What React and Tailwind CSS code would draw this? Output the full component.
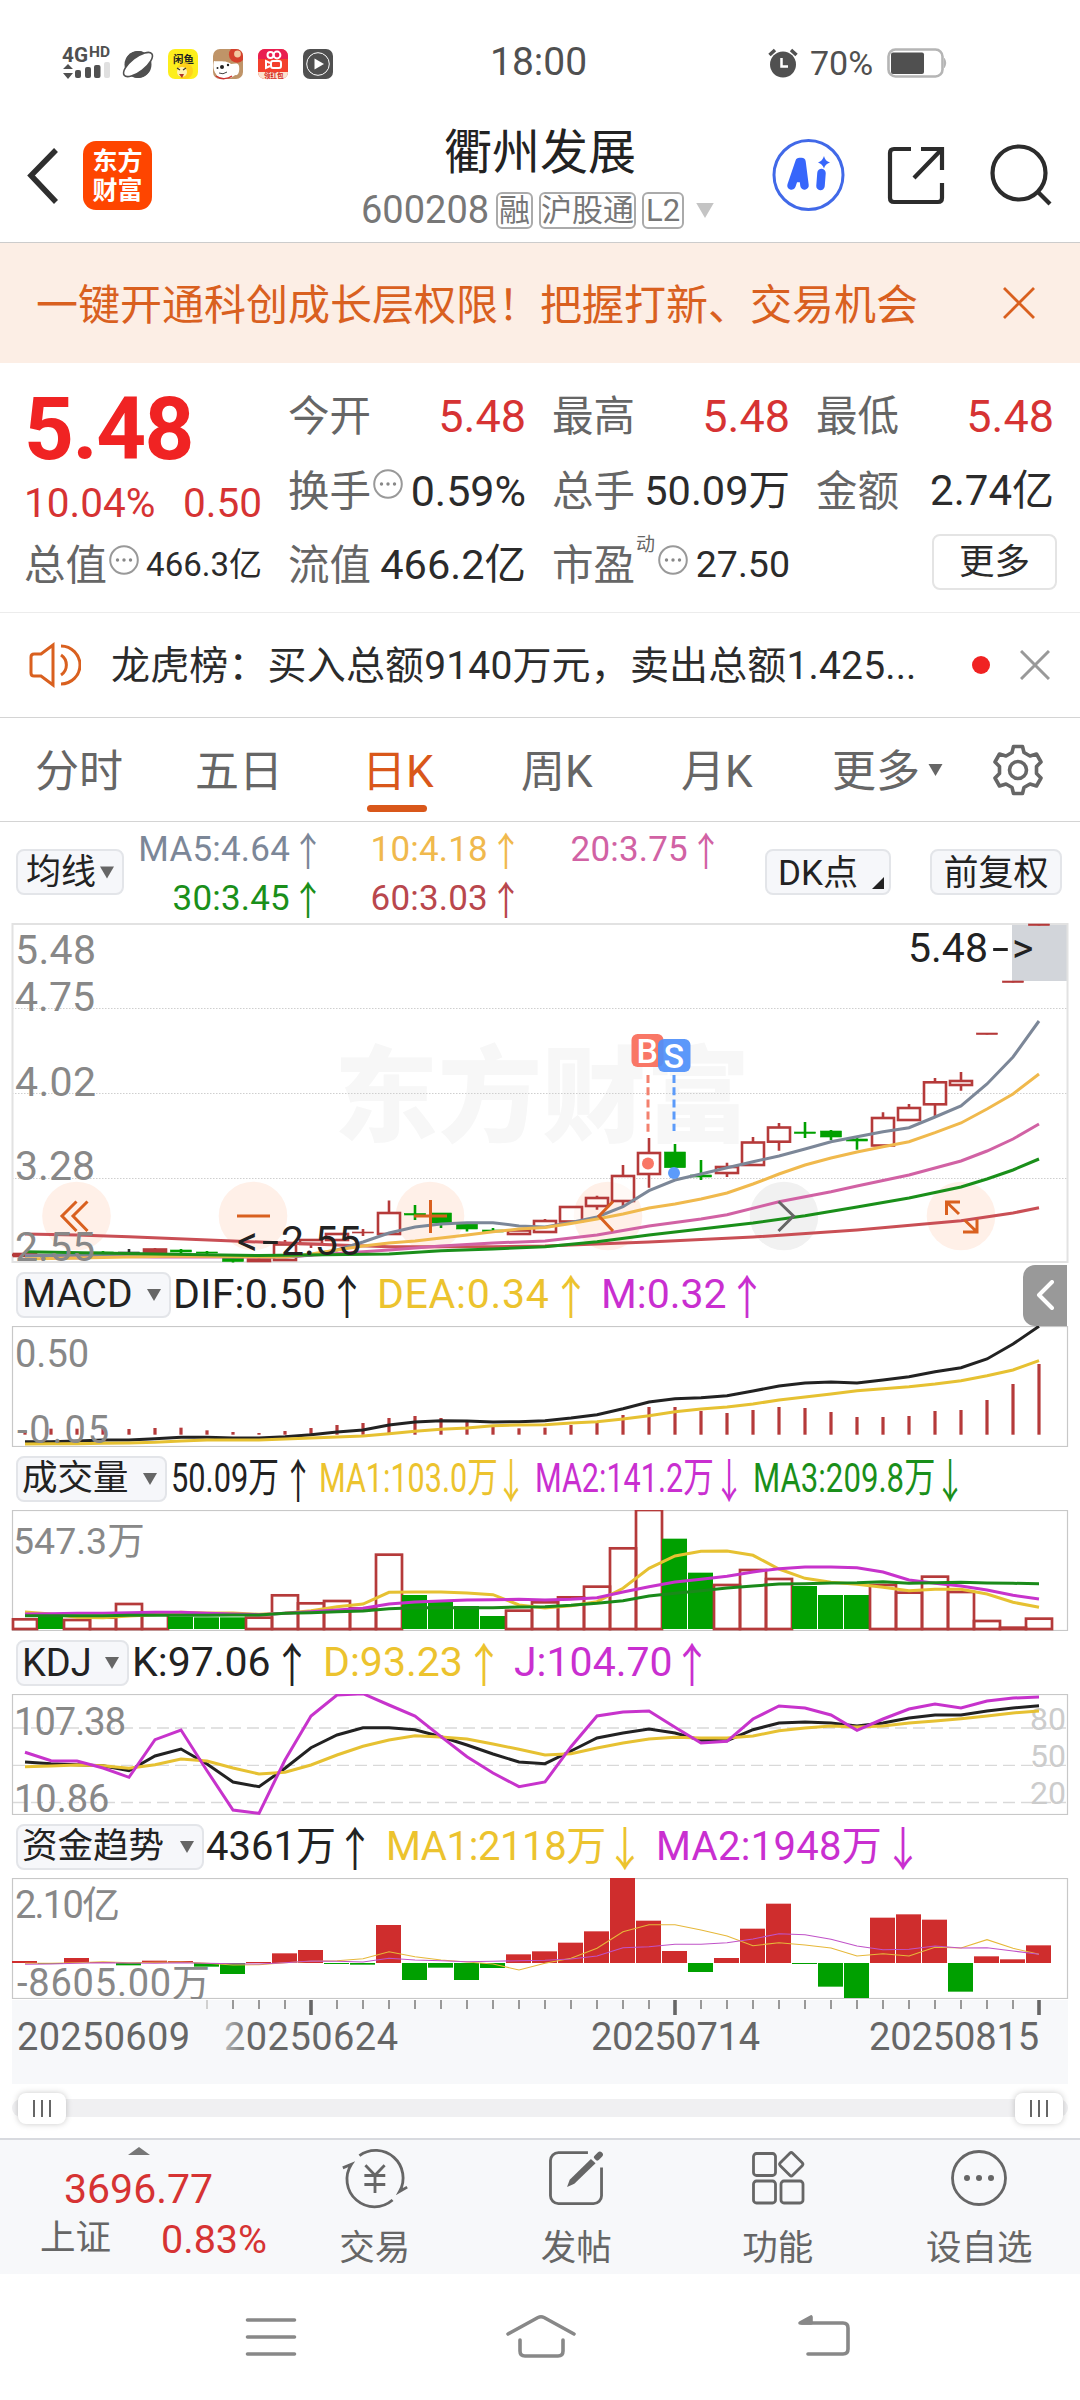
import React from 'react';
import clsx from 'clsx';

const RED = '#b53a3a';
const GREEN = '#00a000';

// x position of the n-th trading day, 40 days across the panel
const dayX = (i) => 25 + i * 26;

// series are stored in thirds of a pixel
const toPoints = (values) =>
  values.map((v, i) => `${dayX(i)},${(v / 3).toFixed(1)}`).join(' ');

// [kind, open/close top, bottom, high, low]
const candles = [
  ['r', 1254, 1256, 1254, 1256],
  ['g', 1257, 1259, 1256, 1260],
  ['r', 1256, 1258, 1254, 1259],
  ['g', 1252, 1254, 1251, 1255],
  ['k', 1252, 1253, 1249, 1254],
  ['r', 1249.5, 1252, 1248, 1253],
  ['g', 1250, 1252, 1249, 1253],
  ['g', 1252, 1253, 1251, 1258],
  ['g', 1256, 1261.5, 1256, 1262.5],
  ['r', 1259.5, 1261, 1258, 1261],
  ['r', 1244.5, 1260, 1240, 1260],
  ['r', 1240, 1244, 1239, 1248],
  ['r', 1234, 1240, 1234, 1240],
  ['x', 1232, 1233, 1229, 1236],
  ['r', 1213, 1234, 1200.5, 1234],
  ['g', 1213.5, 1215, 1205, 1220],
  ['g', 1213, 1223, 1213, 1228],
  ['g', 1224, 1229, 1224, 1231.5],
  ['g', 1230, 1232, 1228, 1233],
  ['r', 1230.5, 1234, 1230, 1234],
  ['r', 1221, 1232, 1219, 1232],
  ['r', 1207, 1221.5, 1207, 1221],
  ['r', 1198, 1206, 1195.7, 1209.7],
  ['r', 1176, 1201, 1165, 1206],
  ['r', 1153, 1174, 1138, 1187.7],
  ['g', 1152, 1167.7, 1144, 1175],
  ['g', 1175, 1177, 1160, 1180],
  ['r', 1167, 1173, 1162.7, 1177],
  ['r', 1142.5, 1165, 1137, 1165],
  ['r', 1127.5, 1141.7, 1123, 1150.7],
  ['g', 1132, 1133.4, 1122, 1138],
  ['g', 1131, 1137, 1130, 1140],
  ['g', 1139, 1141, 1138, 1149.7],
  ['r', 1118, 1145.5, 1112.3, 1145],
  ['r', 1108, 1120, 1104, 1120],
  ['r', 1082.3, 1104.3, 1078, 1116.7],
  ['r', 1081, 1085, 1072, 1090.7],
  ['x', 1033, 1034.5, 1033, 1034.5],
  ['x', 981, 982.5, 981, 982.5],
  ['x', 924, 925.5, 924, 925.5],
];

const averages = [
  { color: '#c94f55', pts: [[0, 1234], [2, 1235], [4, 1236.7], [8, 1241], [12, 1245], [14, 1246.7], [18, 1246.7], [20, 1246], [24, 1242], [28, 1237], [32, 1230], [36, 1220.7], [38, 1213], [39, 1207.7]] },
  { color: '#d162a4', pts: [[0, 1255], [5, 1257], [10, 1257], [14, 1250], [16, 1246], [18, 1243], [20, 1241], [22, 1235], [24, 1226], [26, 1219], [27, 1214.7], [29, 1201.7], [31, 1191.7], [32, 1186], [34, 1175], [36, 1161], [37, 1151], [38, 1139], [39, 1124]] },
  { color: '#7c8798', pts: [[0, 1256], [4, 1254], [8, 1256], [10, 1257], [11, 1255], [12, 1250], [13, 1242], [14, 1233], [15, 1227], [16, 1224], [17, 1222.7], [18, 1222.7], [19, 1226], [20, 1227], [21, 1222.5], [22, 1217], [23, 1206.7], [24, 1190.7], [25, 1180], [26, 1174], [27, 1167.7], [28, 1161.7], [29, 1156], [30, 1149], [31, 1141.7], [32, 1136.7], [33, 1131.7], [34, 1127.7], [35, 1117], [36, 1106], [37, 1084], [38, 1057], [39, 1021]] },
  { color: '#f0b94d', pts: [[0, 1259], [6, 1256], [10, 1257], [11, 1254], [12, 1250], [13, 1246], [14, 1243], [15, 1241], [16, 1238], [17, 1235], [18, 1231.7], [19, 1229], [20, 1227.5], [21, 1223.5], [22, 1219], [23, 1214], [24, 1208], [25, 1204], [26, 1199], [27, 1193], [28, 1184], [29, 1174], [30, 1165], [31, 1158], [32, 1152], [33, 1146.7], [34, 1141.7], [35, 1132.7], [36, 1123], [37, 1109], [38, 1094], [39, 1074]] },
  { color: '#1a8f1a', pts: [[0, 1251.7], [5, 1254], [9, 1255.5], [14, 1254], [16, 1250.7], [18, 1249], [20, 1246.7], [22, 1241.7], [24, 1235], [26, 1229], [28, 1223], [30, 1215.7], [32, 1207], [34, 1198], [36, 1187], [37, 1179], [38, 1170], [39, 1159]] },
];

const macd = {
  bars: [512, 506, 506, 506, 507, 504, 503, 511, 516, 519, 513, 504, 495, 489, 474, 468, 474, 486, 500, 505, 503, 495, 487, 465, 441, 441, 453, 459, 450, 441, 444, 456, 471, 471, 468, 453, 450, 420, 372, 312],
  dif: [545, 545, 543, 540, 540, 536, 532, 532, 534, 534, 530, 524, 516, 510, 495, 486, 482, 483, 486, 485, 482, 474, 464, 446, 426, 416, 413, 407, 393, 378, 369, 366, 369, 360, 350, 335, 323, 297, 252, 199],
  dea: [552, 551, 551, 550, 549, 547, 543, 540, 540, 540, 537, 534, 531, 528, 521, 514, 508, 504, 497, 495, 494, 489, 485, 477, 467, 455, 447, 441, 432, 420, 411, 402, 392, 386, 380, 372, 362, 347, 330, 302],
};

const volume = {
  bars: [1078, 1070, 1080, 1073, 1032, 1057, 1070, 1072, 1072, 1073, 1006, 1030, 1023, 1045, 884, 1005, 1026, 1038, 1068, 1052, 1027, 1012, 980, 865, 750, 836, 938, 975, 930, 957, 978, 1005, 1005, 975, 998, 950, 996, 1083, 1103, 1076],
  down: [1, 6, 7, 8, 15, 16, 17, 18, 25, 26, 30, 31, 32],
  ma1: [1056, 1062, 1072, 1073, 1068, 1064, 1057, 1059, 1059, 1063, 1060, 1052, 1040, 1032, 997, 996, 996, 999, 1004, 1035, 1044, 1037, 1025, 985, 925, 888, 874, 873, 886, 927, 955, 967, 973, 982, 992, 988, 988, 1002, 1027, 1042],
  ma2: [1062, 1061, 1060, 1060, 1058, 1057, 1057, 1060, 1062, 1064, 1060, 1055, 1050, 1045, 1032, 1026, 1023, 1020, 1019, 1018, 1020, 1018, 1013, 996, 980, 966, 958, 949, 936, 926, 921, 921, 923, 936, 960, 970, 978, 990, 1006, 1017],
  ma3: [1067, 1067, 1067, 1067, 1066, 1066, 1066, 1066, 1065, 1065, 1060, 1058, 1055, 1053, 1046, 1043, 1043, 1043, 1043, 1041, 1040, 1036, 1030, 1022, 1008, 1000, 992, 984, 978, 972, 971, 969, 968, 965, 970, 968, 967, 969, 970, 971],
};

const kdj = {
  k: [366, 371, 374, 377, 392, 348, 327, 372, 426, 440, 385, 323, 285, 263, 263, 269, 290, 315, 342, 366, 371, 333, 294, 279, 267, 279, 301, 302, 269, 249, 246, 249, 258, 249, 234, 225, 225, 213, 204, 197],
  d: [380, 378, 375, 377, 385, 374, 357, 363, 384, 402, 397, 375, 345, 319, 300, 287, 291, 297, 312, 328, 345, 341, 324, 309, 297, 292, 294, 294, 288, 272, 264, 258, 261, 258, 249, 243, 236, 228, 219, 213],
  j: [337, 362, 363, 384, 412, 299, 270, 392, 510, 520, 360, 228, 165, 161, 195, 228, 290, 350, 399, 440, 426, 320, 228, 216, 213, 262, 309, 304, 237, 198, 204, 225, 271, 237, 207, 192, 204, 183, 174, 171],
};

const fund = {
  bars: [963, 971, 954, 966, 976, 962, 963, 980, 1002, 966, 940, 930, 972, 974, 855, 1020, 983, 1020, 984, 943, 934, 908, 874, 714, 842, 933, 996, 954, 866, 791, 971, 1040, 1074, 833, 823, 839, 1055, 949, 958, 916],
  ma1: [970, 970, 968, 965, 968, 967, 966, 970, 975, 974, 968, 964, 962, 956, 935, 950, 960, 966, 972, 990, 970, 955, 925, 875, 854, 854, 870, 888, 917, 908, 915, 924, 948, 941, 948, 922, 924, 899, 925, 943],
  ma2: [973, 972, 970, 968, 969, 970, 968, 970, 971, 972, 968, 963, 964, 966, 955, 960, 962, 965, 964, 962, 961, 957, 948, 923, 920, 913, 913, 908, 897, 881, 884, 898, 918, 929, 928, 918, 924, 923, 933, 943],
};

const Series = ({ values, color, width = 3 }) => (
  <polyline points={toPoints(values)} fill="none" stroke={color} strokeWidth={width} />
);

const Frame = ({ y }) => (
  <rect x="12.5" y={y} width="1055" height="120" fill="none" stroke="#c8c8c8" strokeWidth="1.2" />
);

const Arrow = ({ down, className }) => (
  <span
    className={clsx(
      'flex shrink-0 scale-y-[1.2] justify-center font-[Noto_Sans_CJK_SC] leading-none',
      className
    )}
  >
    {down ? '↓' : '↑'}
  </span>
);

const Triangle = ({ className }) => (
  <svg viewBox="0 0 14 12" className={clsx('shrink-0', className)}>
    <path d="M0 0H14L7 12Z" fill="currentColor" />
  </svg>
);

const MoreDot = ({ className }) => (
  <svg viewBox="0 0 30 30" className={clsx('h-[30px] w-[30px] shrink-0', className)}>
    <circle cx="15" cy="15" r="13.8" fill="none" stroke="#999" strokeWidth="2" />
    <circle cx="8.5" cy="15" r="1.7" fill="#888" />
    <circle cx="15" cy="15" r="1.7" fill="#888" />
    <circle cx="21.5" cy="15" r="1.7" fill="#888" />
  </svg>
);

const StatusBar = () => (
  <div className="flex h-[125px] items-center pl-[62px] text-[#505050]">
    <svg viewBox="0 0 272 32" className="h-8 w-[272px] overflow-visible">
      <text x="0" y="14.5" fontSize="21" fontWeight="700" fill="#505050" textLength="26" lengthAdjust="spacingAndGlyphs">4G</text>
      <text x="27" y="10" fontSize="15" fontWeight="700" fill="#505050" textLength="21" lengthAdjust="spacingAndGlyphs">HD</text>
      <path d="M1 22L6 17L11 22ZM1 26L6 32L11 26Z" fill="#505050" />
      <rect x="13" y="23" width="6" height="8" rx="2" fill="#505050" />
      <rect x="23" y="20" width="6" height="11" rx="2" fill="#505050" />
      <rect x="32" y="18" width="6.5" height="13" rx="2" fill="#505050" />
      <rect x="42" y="15" width="6" height="16" rx="2" fill="#e0e0e0" />
      {/* planet */}
      <circle cx="76" cy="17.5" r="13.5" fill="#505050" />
      <ellipse cx="76" cy="17.5" rx="17.5" ry="7" transform="rotate(-38 76 17.5)" fill="#fff" stroke="#505050" strokeWidth="1.6" />
      <path d="M64.5 11A13.5 13.5 0 0 1 82 5.4C76 6 68 12 64 20A13.5 13.5 0 0 1 64.5 11ZM87.5 24A13.5 13.5 0 0 1 70 29.6C77 29 84 23 88 15A13.5 13.5 0 0 1 87.5 24Z" fill="#505050" />
      {/* yellow app */}
      <rect x="106" y="2" width="30" height="30" rx="7" fill="#fdee1c" />
      <text x="111" y="15.5" fontSize="10.5" fontWeight="700" fill="#222">闲鱼</text>
      <circle cx="123" cy="24" r="8" fill="#ffd21c" />
      <circle cx="120" cy="25" r="5" fill="#fff3b0" />
      <path d="M115 21L118 23M121 23L124 21" stroke="#333" strokeWidth="1.2" />
      <path d="M117 27H122L120 31Z" fill="#b1332a" />
      {/* dog app */}
      <rect x="151" y="2" width="30" height="30" rx="7" fill="#bf9468" />
      <path d="M169 2H174A7 7 0 0 1 181 9V13A7.500 7.500 0 0 1 169 2Z" fill="#d5402c" />
      <circle cx="175.500" cy="7" r="3.4" fill="#f2c9a0" />
      <path d="M152 14C156 15 164 13 169 17C172 17 176 15 177 19C178 25 176 29 173 28C170 32 156 33 154 27C151 23 151 18 152 14Z" fill="#fff" />
      <circle cx="160" cy="20" r="2" fill="#222" />
      <circle cx="155.500" cy="21" r="1" fill="#222" />
      <circle cx="166" cy="18" r="1.200" fill="#222" />
      <path d="M157 26Q161 28 165 25" stroke="#444" strokeWidth="1" fill="none" />
      <path d="M154 29C159 33 166 32 170 29" stroke="#c33" strokeWidth="1.5" fill="none" />
      {/* camera app */}
      <rect x="196" y="2" width="30" height="30" rx="7" fill="#f3402c" />
      <path d="M196 9A7 7 0 0 1 203 2H219A7 7 0 0 1 226 9V12H196Z" fill="#e91e50" />
      <g fill="none" stroke="#fff" strokeWidth="2">
        <circle cx="208.500" cy="8" r="3" />
        <circle cx="215" cy="8" r="3.400" />
        <rect x="209" y="14" width="10" height="7" rx="2" />
        <path d="M208 16L204 14V21L208 19" />
      </g>
      <path d="M196 25H226A7 7 0 0 1 219 32H203A7 7 0 0 1 196 25Z" fill="#fbe3cf" />
      <text x="202" y="31" fontSize="6.500" fontWeight="700" fill="#d3281d">领红包</text>
      {/* player */}
      <rect x="241" y="2" width="30" height="30" rx="7" fill="#505050" />
      <circle cx="256" cy="17" r="11.300" fill="none" stroke="#fff" strokeWidth="1" />
      <path d="M252.500 11.500L262 17L252.500 22.500Z" fill="#fff" />
    </svg>
    <span className="ml-[156px] w-[98px] text-[39px] leading-none">18:00</span>
    <svg viewBox="0 0 30 30" className="ml-[180px] h-[30px] w-[30px]">
      <circle cx="15" cy="16.500" r="13" fill="#505050" />
      <path d="M1.500 7L7 2M28.500 7L23 2" stroke="#505050" strokeWidth="3.500" />
      <path d="M13.500 10V18.500H20" fill="none" stroke="#fff" strokeWidth="2.500" />
    </svg>
    <span className="ml-3 w-[65px] text-[34px] leading-none">70%</span>
    <svg viewBox="0 0 60 30" className="ml-[12px] h-[30px] w-[60px]">
      <rect x="1.500" y="1.500" width="54" height="27" rx="7" fill="none" stroke="#b5b5b5" strokeWidth="2.600" />
      <rect x="4" y="4.500" width="33" height="21.500" rx="2" fill="#505050" />
      <path d="M57.500 10.500Q60 15 57.500 19.500Z" fill="#b5b5b5" stroke="#b5b5b5" />
    </svg>
  </div>
);

const Tag = ({ children, className }) => (
  <span
    className={clsx(
      'flex h-[37px] shrink-0 items-center justify-center rounded-[6px] border-2 border-[#aaa] text-[31px] leading-none text-[#777]',
      className
    )}
  >
    {children}
  </span>
);

const Header = () => (
  <div className="flex h-[118px] border-b border-[#ccc] pl-[26px]">
    <svg viewBox="0 0 34 58" className="mt-[21px] h-[58px] w-[34px]">
      <path d="M30 4L5 29.500L30 56" fill="none" stroke="#2f2f2f" strokeWidth="5.500" />
    </svg>
    <div className="mt-4 ml-[23px] flex h-[69px] w-[69px] flex-col items-center justify-center rounded-[13px] bg-[#fe4500] text-[25px] leading-[29px] font-bold text-white">
      <span>东方</span>
      <span>财富</span>
    </div>
    <div className="ml-[209px] flex w-[357px] flex-col">
      <h1 className="mt-[1px] ml-[83px] text-[48px] leading-[54px] text-[#222]">衢州发展</h1>
      <div className="mt-[4px] flex h-[52px] items-center gap-[6px]">
        <span className="mr-[1px] w-[128px] text-[38px] leading-none text-[#777]">600208</span>
        <Tag className="w-[37px]">融</Tag>
        <Tag className="w-[97px]">沪股通</Tag>
        <Tag className="w-[42px]">L2</Tag>
        <Triangle className="ml-1 h-[15px] w-[22px] text-[#c4c4c4]" />
      </div>
    </div>
    <svg viewBox="0 0 290 90" className="ml-[50px] h-[90px] w-[290px]">
      <circle cx="40.500" cy="50" r="34.500" fill="none" stroke="#4169e8" strokeWidth="3" />
      <g fill="none" stroke="#3766fb" strokeWidth="8.500" strokeLinecap="round" strokeLinejoin="round">
        <path d="M23.500 60.500L31.500 37H33.500L36.500 60.500M28 53H35" />
        <path d="M53.500 48L52.500 61" />
      </g>
      <path d="M56 31Q57 36 62 37.500Q57 39 56 43.500Q54.500 39 50 37.500Q54.500 36 56 31Z" fill="#3766fb" />
      <g fill="none" stroke="#2c2c2c" strokeWidth="4.200">
        <path d="M143 24H126Q122 24 122 28V73Q122 77 126 77H170Q174 77 174 73V58" />
        <path d="M153 24H174V45M174 24L146 53" />
        <circle cx="251" cy="48" r="26.500" />
        <path d="M270 67L282 79" />
      </g>
    </svg>
  </div>
);

const Label = ({ children }) => (
  <span className="mt-[3px] text-[41.500px] text-[#666]">{children}</span>
);

const Quote = () => (
  <div className="grid h-[249px] grid-cols-[238px_238px_238px_238px] gap-x-[26px] pl-[24px] leading-none text-[#2b2b2b]">
    <div className="flex h-full flex-col">
      <span className="mt-[22px] h-[88px] text-[87px] leading-[88px] font-bold tracking-[-1.5px] text-[#f02323]">
        5.48
      </span>
      <div className="mt-[8px] flex h-11 items-center justify-between text-[40.500px] text-[#d63333]">
        <span>10.04%</span>
        <span>0.50</span>
      </div>
      <div className="mt-[17px] flex h-11 items-center">
        <Label>总值</Label>
        <MoreDot className="-mt-2 ml-[2px]" />
        <span className="ml-auto text-[33px]">466.3亿</span>
      </div>
    </div>
    <div className="flex flex-col pt-[30px]">
      <div className="flex h-11 items-center justify-between">
        <Label>今开</Label>
        <span className="mt-[2px] text-[45px] text-[#d63333]">5.48</span>
      </div>
      <div className="mt-[31px] flex h-11 items-center">
        <Label>换手</Label>
        <MoreDot className="-mt-3 ml-[2px]" />
        <span className="ml-auto pt-[2px] text-[43px]">0.59%</span>
      </div>
      <div className="mt-[30px] flex h-11 items-center justify-between">
        <Label>流值</Label>
        <span className="pt-[2px] text-[41.500px]">466.2亿</span>
      </div>
    </div>
    <div className="flex flex-col pt-[30px]">
      <div className="flex h-11 items-center justify-between">
        <Label>最高</Label>
        <span className="mt-[2px] text-[45px] text-[#d63333]">5.48</span>
      </div>
      <div className="mt-[31px] flex h-11 items-center justify-between">
        <Label>总手</Label>
        <span className="pt-[2px] text-[41.500px]">50.09万</span>
      </div>
      <div className="mt-[30px] flex h-11 items-center">
        <Label>市盈</Label>
        <span className="-mt-10 ml-[1px] text-[19px] text-[#666]">动</span>
        <MoreDot className="-mt-2 ml-[3px]" />
        <span className="ml-auto pt-[2px] text-[37.500px]">27.50</span>
      </div>
    </div>
    <div className="flex flex-col pt-[30px]">
      <div className="flex h-11 items-center justify-between">
        <Label>最低</Label>
        <span className="mt-[2px] text-[45px] text-[#d63333]">5.48</span>
      </div>
      <div className="mt-[31px] flex h-11 items-center justify-between">
        <Label>金额</Label>
        <span className="pt-[2px] text-[42px]">2.74亿</span>
      </div>
      <button className="mt-[22px] -mr-[3px] ml-auto h-[56px] w-[125px] rounded-lg border-2 border-[#e4e4e4] pt-[1px] text-[35.500px] leading-none">
        更多
      </button>
    </div>
  </div>
);

const News = () => (
  <div className="flex h-[106px] items-center border-y border-t-[#ececec] border-b-[#d4d4d4] pl-[29px]">
    <svg viewBox="0 0 52 46" className="h-[46px] w-[52px]" fill="none" stroke="#d9601f" strokeWidth="3">
      <path d="M24 3V43L12 34H5Q2 34 2 31V15Q2 12 5 12H12Z" />
      <path d="M32 13A12 12 0 0 1 32 33" />
      <path d="M32 4A19 19 0 0 1 32 42" />
    </svg>
    <p className="ml-[30px] w-[808px] pt-[2px] text-[39px] leading-none tracking-[0.150px] whitespace-nowrap text-[#2b2b2b]">
      龙虎榜：买入总额9140万元，卖出总额1.425...
    </p>
    <span className="ml-[53px] h-[18px] w-[18px] rounded-full bg-[#f02222]" />
    <svg viewBox="0 0 30 30" className="ml-[30px] h-[30px] w-[30px]" stroke="#999" strokeWidth="3">
      <path d="M1 1L29 29M29 1L1 29" />
    </svg>
  </div>
);

const tabs = [
  { name: '分时', className: 'ml-[35px] w-[88px]' },
  { name: '五日', className: 'ml-[72px] w-[88px]' },
  { name: '日K', className: 'ml-[79px] w-[73px] text-[#d9571a]', active: true },
  { name: '周K', className: 'ml-[86px] w-[75px]' },
  { name: '月K', className: 'ml-[85px] w-[75px]' },
  { name: '更多', className: 'ml-[76px] w-[90px]' },
];

const Tabs = () => (
  <div className="flex h-[104px] items-center border-b border-[#d4d4d4] text-[44px] leading-none text-[#666]">
    {tabs.map((tab) => (
      <span key={tab.name} className={clsx('relative pt-[5px] whitespace-nowrap', tab.className)}>
        {tab.name}
        {tab.active && (
          <span className="absolute top-[60px] left-[5px] h-[7px] w-[60px] rounded-full bg-[#d9571a]" />
        )}
      </span>
    ))}
    <Triangle className="ml-[6px] h-[12px] w-[15px]" />
    <svg viewBox="0 0 52 52" className="ml-[49px] h-[52px] w-[52px]" fill="none" stroke="#666" strokeWidth="3.600" strokeLinejoin="round">
      <path d="M21.500 2.500H30.500L32 8.500L38 12L44.500 10L49 18L44.500 22.500V29.500L49 34L44.500 42L38 40L32 43.500L30.500 49.500H21.500L20 43.500L14 40L7.500 42L3 34L7.500 29.500V22.500L3 18L7.500 10L14 12L20 8.500Z" />
      <circle cx="26" cy="26" r="8.500" />
    </svg>
  </div>
);

const Chip = ({ children, className }) => (
  <button
    className={clsx(
      'flex h-[46px] shrink-0 items-center rounded-lg border-2 border-[#e3e5e9] bg-[#f6f7fa] leading-none text-[#222]',
      className
    )}
  >
    {children}
  </button>
);

const maCells = [
  { text: 'MA5:4.64', className: 'text-[#7c8798]' },
  { text: '10:4.18', className: 'text-[#f0b94d]' },
  { text: '20:3.75', className: 'text-[#d162a4]' },
  { text: '30:3.45', className: 'text-[#1a8f1a]' },
  { text: '60:3.03', className: 'text-[#b9474d]' },
];

const AverageBar = () => (
  <div className="flex h-[101px] pl-[16px]">
    <Chip className="mt-[27px] w-[108px] pl-[8px] text-[35px]">
      均线
      <Triangle className="ml-[4px] h-[13px] w-[14px] text-[#666]" />
    </Chip>
    <div className="grid h-[98px] w-[590px] grid-cols-[192px_198px_200px] grid-rows-[49px_49px] pt-[3px] text-[35px] leading-none tracking-[0.200px]">
      {maCells.map((c) => (
        <div key={c.text} className={clsx('flex items-center justify-end', c.className)}>
          {c.text}
          <Arrow className="ml-[10px] w-[16px] text-[33px]" />
        </div>
      ))}
    </div>
    <Chip className="relative mt-[27px] ml-[51px] w-[126px] pt-[2px] pl-[11px] text-[35px]">
      DK点
      <svg viewBox="0 0 12 12" className="absolute right-[5px] bottom-[4px] h-[12px] w-[12px]">
        <path d="M12 0V12H0Z" fill="#222" />
      </svg>
    </Chip>
    <Chip className="mt-[27px] ml-[39px] w-[132px] justify-center pt-[2px] text-[35px]">前复权</Chip>
  </div>
);

const Candle = ({ data, i }) => {
  const [kind, top, bottom, high, low] = data;
  const x = dayX(i);
  if (kind === 'r') {
    return (
      <g stroke={RED} strokeWidth="2.600" fill="none">
        <rect x={x - 11} y={top} width="22" height={bottom - top} fill="#fff" fillOpacity="0.6" />
        <path d={`M${x} ${high}V${top}M${x} ${bottom}V${low}`} />
      </g>
    );
  }
  const color = kind === 'g' ? GREEN : kind === 'k' ? '#333' : RED;
  return (
    <g fill={color} stroke={color}>
      <rect x={x - 10.5} y={top} width="21" height={bottom - top} strokeWidth="0.600" />
      <path d={`M${x} ${high}V${low}`} strokeWidth="2.600" />
    </g>
  );
};

const MainChart = () => (
  <svg viewBox="0 923 1080 340" className="block h-[340px] w-full overflow-visible">
    <text x="334" y="1134" fontSize="104" fontWeight="900" fill="#f7f7f7">东方财富</text>
    <rect x="1012" y="924" width="55" height="57" fill="#d2d5da" />
    <g stroke="#cfcfcf" strokeWidth="1" strokeDasharray="1.500 1.500">
      <path d="M12 1008.500H1067M12 1093.500H1067M12 1178.500H1067" />
    </g>
    <rect x="12.500" y="924" width="1055" height="338" fill="none" stroke="#e2e2e2" strokeWidth="2" />
    {[76.5, 253, 430, 608, 784, 961].map((cx) => (
      <circle key={cx} cx={cx} cy="1216" r="34.300" fill={cx === 784 ? '#f1f1f1' : '#fff0e8'} />
    ))}
    {candles.map((c, i) => (
      <Candle key={i} data={c} i={i} />
    ))}
    <path d="M12 1255H36" stroke={RED} strokeWidth="2.500" />
    {averages.map((a) => (
      <polyline
        key={a.color}
        points={a.pts.map(([i, y]) => `${dayX(i)},${y}`).join(' ')}
        fill="none"
        stroke={a.color}
        strokeWidth="3"
      />
    ))}
    <g fill="none" stroke="#d9601f" strokeWidth="3">
      <path d="M76.500 1201.500L62 1216L76.500 1231M87.500 1201.500L73 1216L87.500 1231" />
      <path d="M237 1216H270M414 1216H447M430.500 1200V1233" />
      <path d="M613 1201.500L599 1216L613 1231" />
      <path d="M778.500 1201.500L793.500 1216L778.500 1231" stroke="#666" />
      <path d="M960 1202H946.500V1215M946.500 1202L959 1214M963 1232H977V1219M977 1232L964.500 1220" />
    </g>
    <g strokeWidth="3" strokeDasharray="8 4.200">
      <path d="M648 1075V1134" stroke="#f3816f" />
      <path d="M674 1075V1131" stroke="#5c9bfa" />
    </g>
    <circle cx="648" cy="1163.500" r="6" fill="#f97766" />
    <circle cx="674" cy="1173" r="6" fill="#5c9bfa" />
    <rect x="631.500" y="1034" width="32" height="33" rx="6" fill="#f97766" />
    <text x="636.500" y="1062.500" fontSize="34" fontWeight="500" fill="#fff">B</text>
    <rect x="658" y="1039" width="32.500" height="33" rx="6" fill="#5090fa" fillOpacity="0.93" />
    <text x="663.500" y="1067.500" fontSize="34" fontWeight="500" fill="#fff">S</text>
    <g fontSize="41" fill="#888">
      <text x="15" y="963.500" textLength="81">5.48</text>
      <text x="15" y="1010.500" textLength="80">4.75</text>
      <text x="15" y="1095.500" textLength="81">4.02</text>
      <text x="15" y="1180" textLength="80">3.28</text>
      <text x="15" y="1261" textLength="80">2.55</text>
    </g>
    <g fontSize="41" fill="#222">
      <text x="908" y="961.500">5.48</text>
      <text x="992" y="961.500" textLength="17" lengthAdjust="spacingAndGlyphs">-</text>
      <text x="1012" y="961.500">&gt;</text>
      <text x="237" y="1255">&lt;</text>
      <text x="262" y="1255" textLength="17" lengthAdjust="spacingAndGlyphs">-</text>
      <text x="281" y="1255">2.55</text>
    </g>
  </svg>
);

const LegendRow = ({ title, chipClass, children, className }) => (
  <div className={clsx('flex h-[63px] items-center pl-[16px] leading-none', className)}>
    <Chip className={clsx('justify-between pr-[8px] pl-[4px]', chipClass)}>
      {title}
      <Triangle className="h-[12px] w-[14px] text-[#666]" />
    </Chip>
    {children}
  </div>
);

const Legend = ({ text, down, className, textClass = '', arrowClass }) => (
  <div className={clsx('flex shrink-0 items-center text-[41px]', className)}>
    <span className={clsx('shrink-0 whitespace-nowrap', textClass)}>{text}</span>
    <Arrow down={down} className={clsx('w-[20px] text-[39px]', arrowClass)} />
  </div>
);

const MacdPanel = () => (
  <>
    <LegendRow title="MACD" chipClass="w-[155px] text-[39px]">
      <Legend text="DIF:0.50" className="ml-[2px] text-[#222]" textClass="w-[164px] tracking-[0.300px]" />
      <Legend text="DEA:0.34" className="ml-[20px] text-[#ecc32e]" textClass="w-[184px] tracking-[0.700px]" />
      <Legend text="M:0.32" className="ml-[20px] text-[#c92fd0]" textClass="w-[136px]" />
      <button className="mt-[1px] ml-auto mr-[13px] flex h-[61px] w-[44px] items-center justify-center rounded-l-xl bg-[#999]">
        <svg viewBox="0 0 18 30" className="h-[30px] w-[18px]">
          <path d="M16 2L3 15L16 28" fill="none" stroke="#fff" strokeWidth="4" strokeLinecap="round" strokeLinejoin="round" />
        </svg>
      </button>
    </LegendRow>
    <svg viewBox="0 66 1080 121" className="block h-[121px] w-full">
      <Frame y={66.5} />
      <g stroke={RED} strokeWidth="3.200">
        {macd.bars.map((v, i) => (
          <path key={i} d={`M${dayX(i)} 174.700V${v / 3}`} />
        ))}
      </g>
      <Series values={macd.dif} color="#222" />
      <Series values={macd.dea} color="#e6c132" />
      <g fontSize="38" fill="#888">
        <text x="15" y="106.500">0.50</text>
        <text x="17" y="183" textLength="92">-0.05</text>
      </g>
    </svg>
  </>
);

const VolumePanel = () => (
  <>
    <LegendRow title="成交量" chipClass="w-[151px] text-[35.500px]">
      <Legend text="50.09万" className="ml-[4px] text-[#222]" textClass="w-[117px] origin-left scale-x-[0.75]" arrowClass="scale-x-[0.8]" />
      <Legend text="MA1:103.0万" down className="ml-[11px] text-[#ecc32e]" textClass="w-[182px] origin-left scale-x-[0.745]" arrowClass="scale-x-[0.8]" />
      <Legend text="MA2:141.2万" down className="ml-[14px] text-[#c92fd0]" textClass="w-[184px] origin-left scale-x-[0.745]" arrowClass="scale-x-[0.8]" />
      <Legend text="MA3:209.8万" down className="ml-[14px] text-[#1a8f1a]" textClass="w-[187px] origin-left scale-x-[0.76]" arrowClass="scale-x-[0.8]" />
    </LegendRow>
    <svg viewBox="0 250 1080 121" className="block h-[121px] w-full">
      <Frame y={250.5} />
      {volume.bars.map((v, i) =>
        volume.down.includes(i) ? (
          <rect key={i} x={dayX(i) - 13} y={v / 3} width="25" height={369 - v / 3} fill={GREEN} />
        ) : (
          <rect key={i} x={Math.max(dayX(i) - 13, 13)} y={v / 3} width={i === 0 ? 24 : 26} height={369 - v / 3} fill="none" stroke={RED} strokeWidth="2.700" />
        )
      )}
      <Series values={volume.ma1} color="#e6c132" />
      <Series values={volume.ma2} color="#c733cc" />
      <Series values={volume.ma3} color="#1a8a1a" />
      <text x="13" y="294" fontSize="37.500" fill="#888">547.3万</text>
    </svg>
  </>
);

const KdjPanel = () => (
  <>
    <LegendRow title="KDJ" chipClass="w-[113px] text-[38px]">
      <Legend text="K:97.06" className="ml-[3px] text-[#222]" textClass="w-[150px]" />
      <Legend text="D:93.23" className="ml-[21px] text-[#ecc32e]" textClass="w-[151px]" />
      <Legend text="J:104.70" className="ml-[20px] text-[#c92fd0]" textClass="w-[168px]" />
    </LegendRow>
    <svg viewBox="0 54 1080 121" className="block h-[121px] w-full">
      <Frame y={54.5} />
      <path d="M13 88H1066M13 125.300H1066M13 162.500H1066" stroke="#d9d9d9" strokeWidth="1.300" strokeDasharray="12 6" />
      <g fontSize="32" fill="#ccc" textAnchor="end">
        <text x="1066" y="89.500">80</text>
        <text x="1066" y="126.500">50</text>
        <text x="1066" y="164">20</text>
      </g>
      <Series values={kdj.k} color="#222" />
      <Series values={kdj.d} color="#e6c132" />
      <Series values={kdj.j} color="#c733cc" />
      <g fontSize="38" fill="#888">
        <text x="14" y="94.500" textLength="112">107.38</text>
        <text x="14" y="171.500">10.86</text>
      </g>
    </svg>
  </>
);

const FundPanel = () => (
  <>
    <LegendRow title="资金趋势" chipClass="w-[188px] text-[35.500px]">
      <Legend text="4361万" className="ml-[2px] text-[#222]" textClass="w-[139px] text-[40px]" />
      <Legend text="MA1:2118万" down className="ml-[21px] text-[#ecc32e]" textClass="w-[229px] text-[40px] tracking-[-0.400px]" />
      <Legend text="MA2:1948万" down className="ml-[21px] text-[#c92fd0]" textClass="w-[237px] text-[40px] tracking-[0.300px]" />
    </LegendRow>
    <svg viewBox="0 238 1080 121" className="block h-[121px] w-full">
      <Frame y={238.5} />
      {fund.bars.map((v, i) => {
        const y = v / 3;
        const zero = 323;
        return (
          <rect
            key={i}
            x={dayX(i) - 13}
            y={Math.min(y, zero)}
            width="25"
            height={Math.max(Math.abs(zero - y), 1)}
            fill={y < zero ? '#cf2d2d' : GREEN}
          />
        );
      })}
      <Series values={fund.ma1} color="#e6b83a" width={1.1} />
      <Series values={fund.ma2} color="#c053c8" width={1.1} />
      <g fontSize="38" fill="#888">
        <text x="15" y="278" textLength="105">2.10亿</text>
        <text x="17" y="356" textLength="193">-8605.00万</text>
      </g>
    </svg>
  </>
);

const TimeAxis = () => (
  <svg viewBox="0 1999 1080 85" className="block h-[85px] w-full">
    <defs>
      <linearGradient id="fade" x1="0" x2="1">
        <stop offset="0" stopColor="#bbb" />
        <stop offset="0.14" stopColor="#666" />
      </linearGradient>
    </defs>
    <rect x="12" y="2000" width="1056" height="84" fill="#f7f8fa" />
    {Array.from({ length: 33 }, (_, n) => n + 7).map((i) => {
      const major = i === 11 || i === 25 || i === 39;
      return (
        <path
          key={i}
          d={`M${dayX(i)} 2000V${major ? 2015 : 2009}`}
          stroke={i === 7 ? '#d0d0d0' : major ? '#666' : '#999'}
          strokeWidth={major ? 3.6 : 2}
        />
      );
    })}
    <g fontSize="38" fill="#666">
      <text x="17" y="2049.500" textLength="173">20250609</text>
      <text x="224" y="2049.500" textLength="174" fill="url(#fade)">20250624</text>
      <text x="591" y="2049.500" textLength="169">20250714</text>
      <text x="869" y="2049.500" textLength="170">20250815</text>
    </g>
  </svg>
);

const Handle = () => (
  <div className="flex h-[31px] w-[48px] items-center justify-center gap-[6px] rounded-lg bg-white shadow-[0_0_6px_rgba(0,0,0,0.22)]">
    <span className="h-[17px] w-[2px] bg-[#666]" />
    <span className="h-[17px] w-[2px] bg-[#666]" />
    <span className="h-[17px] w-[2px] bg-[#666]" />
  </div>
);

const RangeSlider = () => (
  <div className="flex h-[54px] items-center px-[12px]">
    <div className="mt-[-6px] flex h-[18px] w-full items-center justify-between rounded-full bg-[#f0f0f2] pr-[5px] pl-[6px]">
      <Handle />
      <Handle />
    </div>
  </div>
);

const actions = [
  {
    name: '交易',
    icon: (
      <svg viewBox="32 20 210 190" className="h-[63px] w-[70px]" fill="none" stroke="#666" strokeWidth="8.500">
        <path d="M90 46A83 83 0 0 1 211 154L234 141" />
        <path d="M190 180A83 83 0 0 1 66 72L40 83" />
        <path d="M108 75L137 105L166 75M105 106H168M105 133H168M137 105V159" />
      </svg>
    ),
  },
  {
    name: '发帖',
    icon: (
      <svg viewBox="636 20 210 190" className="h-[63px] w-[70px]" fill="none" stroke="#666" strokeWidth="8.500">
        <path d="M777 37H688A24 24 0 0 0 664 61V167A24 24 0 0 0 688 191H794A24 24 0 0 0 818 167V82" />
        <path d="M714 141L722 119L786 56L800 69L736 131Z" fill="#666" stroke="none" />
        <path d="M804 52L813 43" strokeWidth="18" strokeLinecap="round" />
        <path d="M790 51L804 65" stroke="#f7f8fa" strokeWidth="4" />
      </svg>
    ),
  },
  {
    name: '功能',
    icon: (
      <svg viewBox="743 2147 70 63" className="h-[63px] w-[70px]" fill="none" stroke="#666" strokeWidth="2.800">
        <rect x="753.500" y="2153.500" width="22" height="22" rx="3" />
        <rect x="753.500" y="2181" width="22" height="22" rx="3" />
        <rect x="781" y="2181" width="22" height="22" rx="3" />
        <rect x="782.500" y="2155.500" width="17.500" height="17.500" rx="2" transform="rotate(45 791.250 2164.250)" />
      </svg>
    ),
  },
  {
    name: '设自选',
    icon: (
      <svg viewBox="944 2147 70 63" className="h-[63px] w-[70px]" fill="none" stroke="#666" strokeWidth="2.800">
        <circle cx="979" cy="2178" r="26.500" />
        <g fill="#666" stroke="none">
          <circle cx="967" cy="2178" r="3" />
          <circle cx="979" cy="2178" r="3" />
          <circle cx="991" cy="2178" r="3" />
        </g>
      </svg>
    ),
  },
];

const BottomBar = () => (
  <div className="flex h-[136px] border-t-2 border-[#d8dadf] bg-[#f7f8fa] leading-none text-[#666]">
    <div className="flex w-[274px] flex-col pl-[40px]">
      <svg viewBox="0 0 22 8" className="mt-[7px] ml-[88px] h-[8px] w-[22px]">
        <path d="M11 0L22 8H0Z" fill="#777" />
      </svg>
      <span className="mt-[14px] ml-[24px] text-[41px] text-[#d63333]">3696.77</span>
      <div className="mt-[6px] flex h-[46px] w-[227px] items-center justify-between">
        <span className="text-[35.500px]">上证</span>
        <span className="pt-[1px] text-[39.500px] text-[#d63333]">0.83%</span>
      </div>
    </div>
    {actions.map((a) => (
      <div key={a.name} className="flex w-[201.500px] flex-col items-center pt-[7px]">
        {a.icon}
        <span className="mt-[21px] text-[35.500px]">{a.name}</span>
      </div>
    ))}
  </div>
);

const SystemNav = () => (
  <div className="flex h-[126px] justify-center bg-white">
    <svg viewBox="230 2310 620 54" className="mt-9 h-[54px] w-[620px]" fill="none" stroke="#888" strokeWidth="3.600" strokeLinecap="round" strokeLinejoin="round">
      <path d="M247.500 2320H294.500M247.500 2337H294.500M247.500 2354H294.500" />
      <path d="M508 2334L538 2317.500Q541 2316 544 2317.500L574 2334" />
      <path d="M520 2340V2351Q520 2356 525 2356H558Q563 2356 563 2351V2340" />
      <path d="M802 2323H843Q848 2323 848 2328V2349Q848 2354 843 2354H808" />
      <path d="M800 2323L811 2317V2323Z" fill="#888" />
    </svg>
  </div>
);

const App = () => {
  return (
    <div className="h-[2400px] w-[1080px] overflow-hidden bg-white font-[Roboto,'Noto_Sans_CJK_SC',sans-serif]">
      <StatusBar />
      <Header />
      <div className="flex h-[120px] items-center bg-[#fceee5] pl-[36px] text-[#d9601f]">
        <span className="w-[884px] pt-[5px] text-[42px] leading-none whitespace-nowrap">
          一键开通科创成长层权限！把握打新、交易机会
        </span>
        <svg viewBox="0 0 34 34" className="ml-[82px] h-[34px] w-[34px]" stroke="#d9601f" strokeWidth="2.800">
          <path d="M2 2L32 32M32 2L2 32" />
        </svg>
      </div>
      <Quote />
      <News />
      <Tabs />
      <AverageBar />
      <MainChart />
      <MacdPanel />
      <VolumePanel />
      <KdjPanel />
      <FundPanel />
      <TimeAxis />
      <RangeSlider />
      <BottomBar />
      <SystemNav />
    </div>
  );
};

export default App;
